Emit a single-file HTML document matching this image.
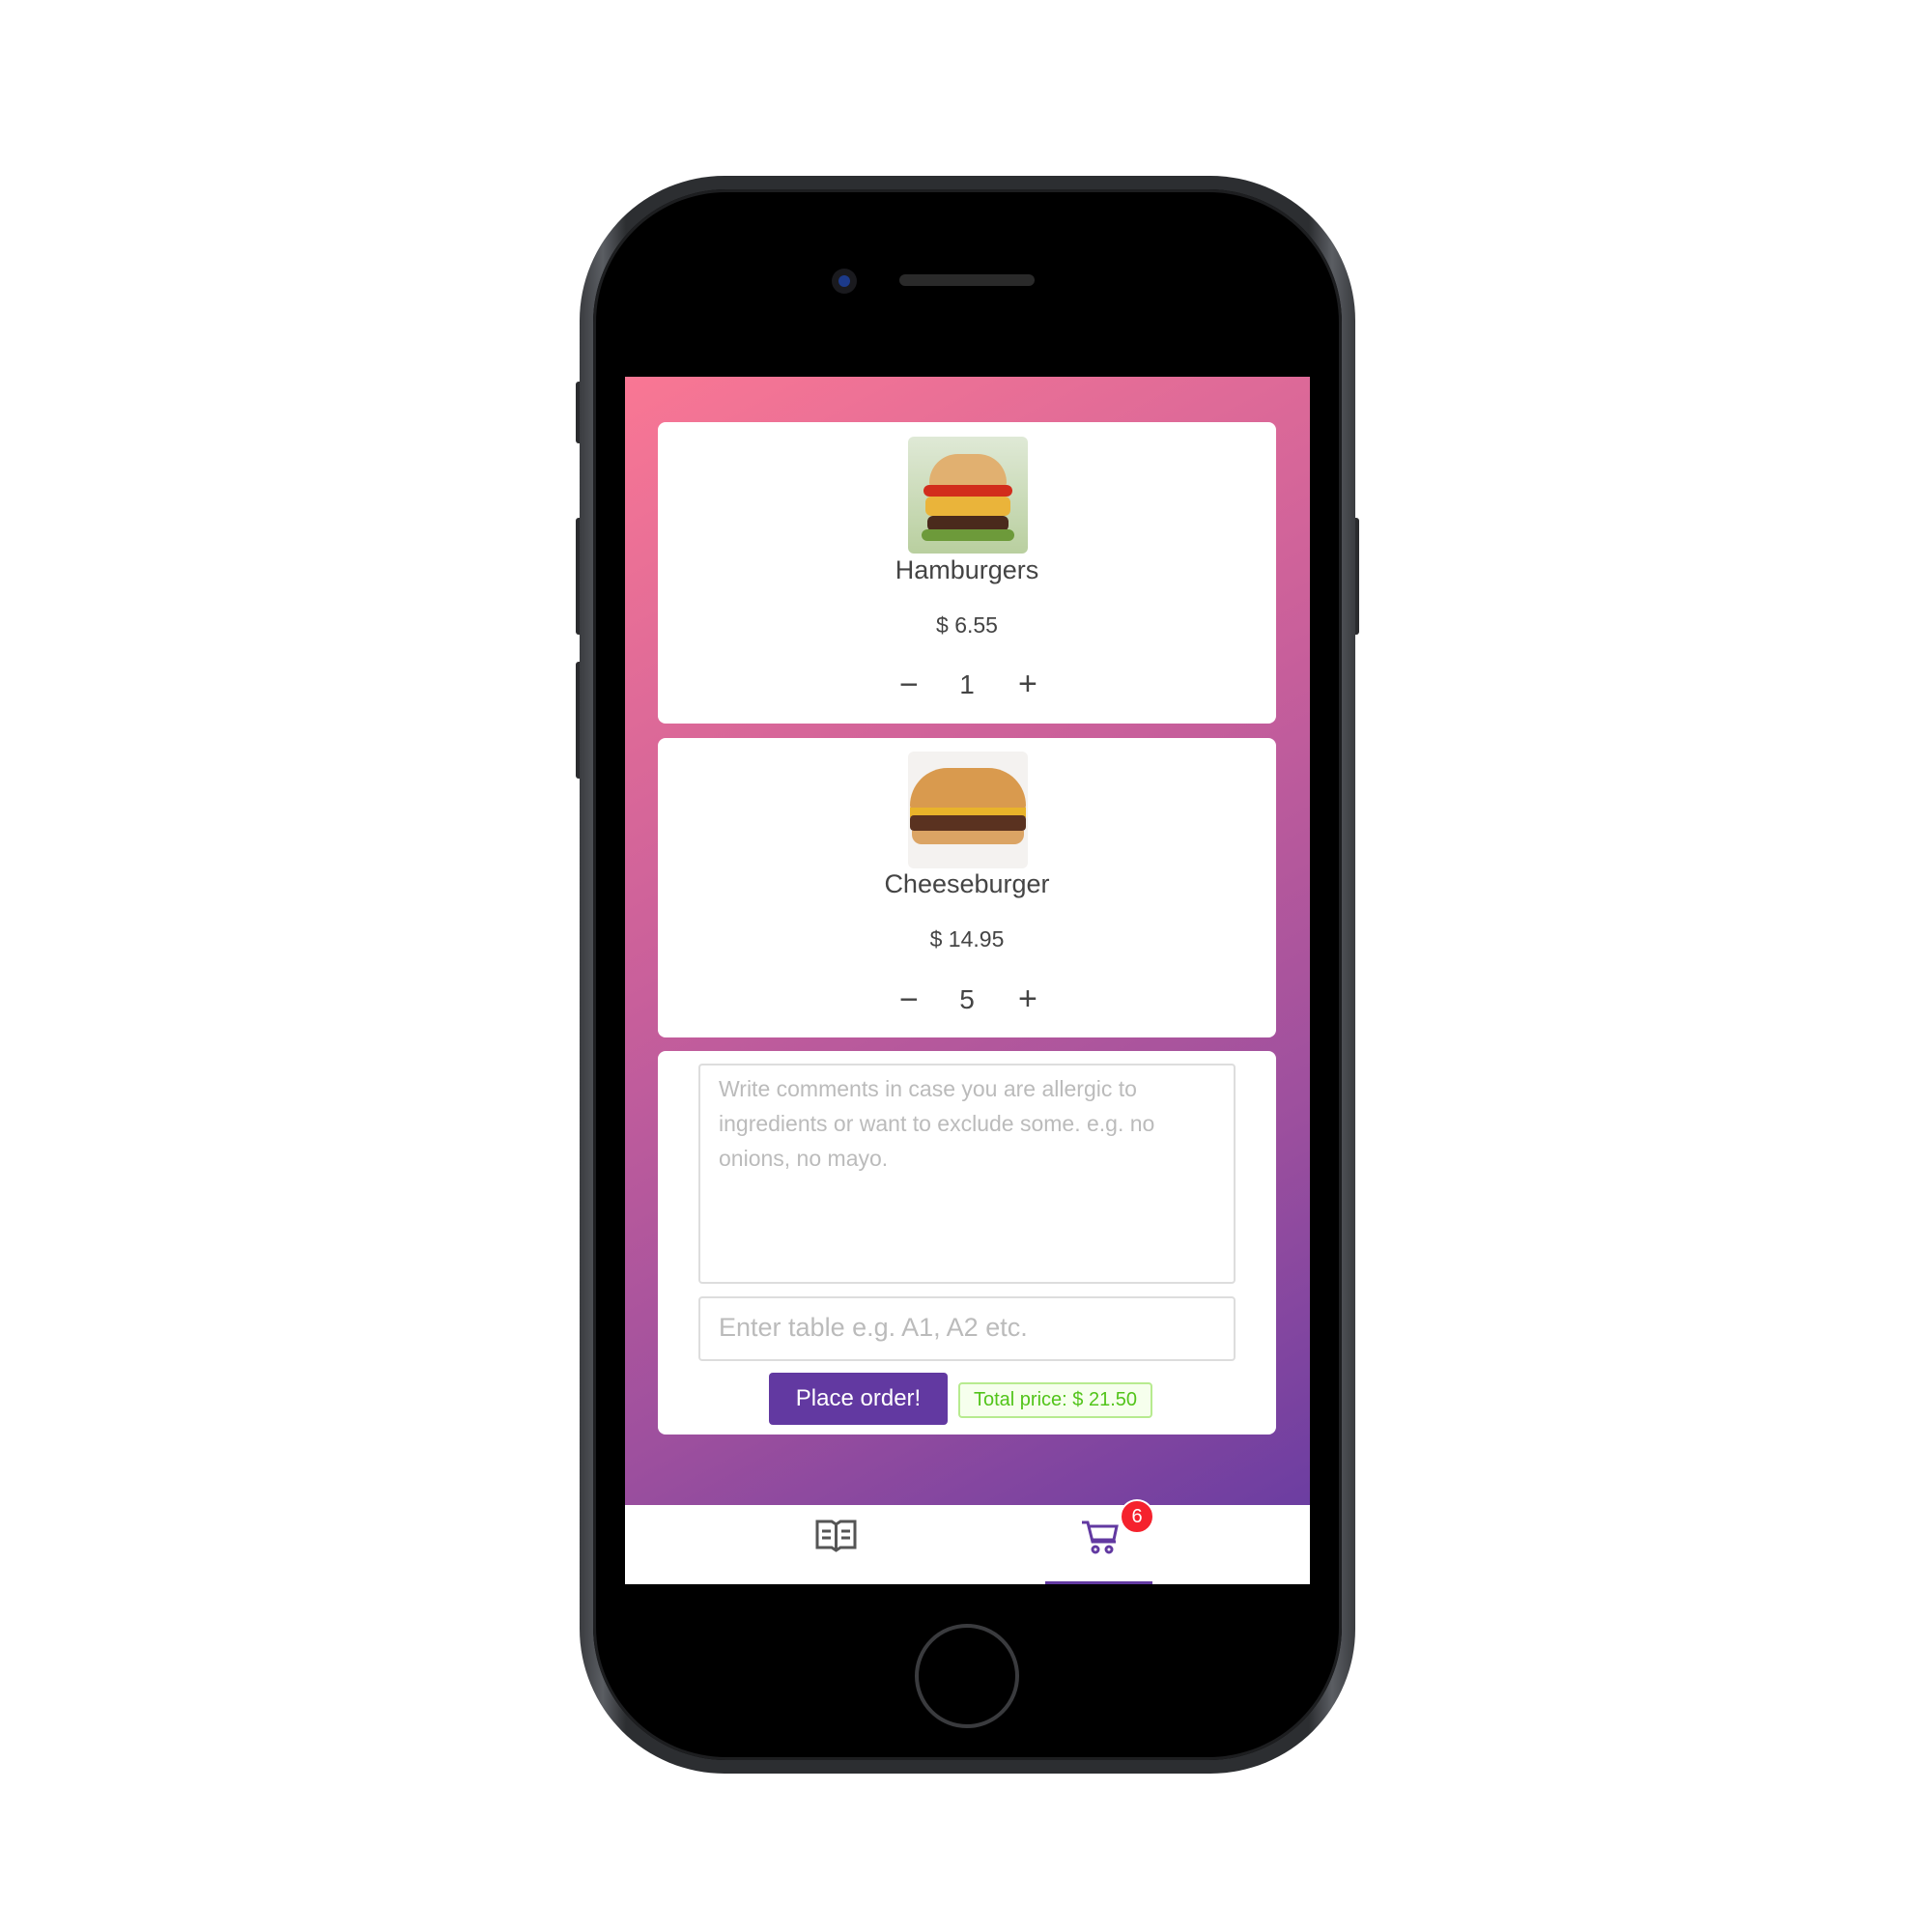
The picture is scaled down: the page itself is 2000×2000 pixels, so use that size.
<!DOCTYPE html>
<html><head><meta charset="utf-8"><style>
*{box-sizing:border-box;margin:0;padding:0}
body{width:2000px;height:2000px;background:#fff;position:relative;overflow:hidden;font-family:"Liberation Sans",sans-serif}
.abs{position:absolute}
.phone{left:600px;top:182px;width:803px;height:1654px;border-radius:150px;background:linear-gradient(90deg,#3a3c40,#5b5e63 3%,#2c2e31 6%,#2c2e31 94%,#5b5e63 97%,#3a3c40);}
.inner{left:614px;top:196px;width:775px;height:1626px;border-radius:138px;background:#000;box-shadow:inset 0 0 0 3px #1d1e20}
.screen{left:647px;top:390px;width:709px;height:1250px;background:linear-gradient(152deg,#f97794 0%,#c85f9b 40%,#9c4f9e 70%,#623aa2 100%);overflow:hidden}
.card{position:absolute;left:34px;width:640px;background:#fff;border-radius:8px}
.name{position:absolute;width:100%;text-align:center;font-size:27px;color:#444}
.price{position:absolute;width:100%;text-align:center;font-size:23px;color:#444}
.cnt{position:absolute;width:100%;text-align:center;font-size:28px;color:#444}
.pm{position:absolute;font-size:34px;color:#444;font-weight:300}
.img{position:absolute;left:259px;width:124px;height:121px;border-radius:6px;overflow:hidden}
.ta{position:absolute;left:42px;width:556px;border:2px solid #ddd;border-radius:4px;color:#bbb}
</style></head><body>
<div class="abs" style="left:596px;top:395px;width:8px;height:64px;background:#2a2b2e;border-radius:3px"></div>
<div class="abs" style="left:596px;top:536px;width:8px;height:121px;background:#2a2b2e;border-radius:3px"></div>
<div class="abs" style="left:596px;top:685px;width:8px;height:121px;background:#2a2b2e;border-radius:3px"></div>
<div class="abs" style="left:1399px;top:536px;width:8px;height:121px;background:#2a2b2e;border-radius:3px"></div>
<div class="abs phone"></div>
<div class="abs inner"></div>
<div class="abs" style="left:861px;top:278px;width:26px;height:26px;border-radius:50%;background:#1a1a1e"><div style="margin:7px;width:12px;height:12px;border-radius:50%;background:#1c3a8a"></div></div>
<div class="abs" style="left:931px;top:284px;width:140px;height:12px;border-radius:6px;background:#2a2a2a"></div>
<div class="abs" style="left:947px;top:1681px;width:108px;height:108px;border-radius:50%;border:4px solid #3a3b3e;background:#000"></div>
<div class="abs screen">
 <div class="card" style="top:47px;height:312px">
  <div class="img" style="top:15px;background:linear-gradient(#dfe9d6,#b9cf9f)">
   <div style="position:absolute;left:22px;top:18px;width:80px;height:34px;border-radius:40px 40px 6px 6px;background:#e1b070"></div>
   <div style="position:absolute;left:16px;top:50px;width:92px;height:12px;background:#d22c1c;border-radius:6px"></div>
   <div style="position:absolute;left:18px;top:62px;width:88px;height:20px;background:#eab43a;border-radius:6px"></div>
   <div style="position:absolute;left:20px;top:82px;width:84px;height:16px;background:#4a2a1c;border-radius:6px"></div>
   <div style="position:absolute;left:14px;top:96px;width:96px;height:12px;background:#6d9a3a;border-radius:6px"></div>
  </div>
  <div class="name" style="top:138px">Hamburgers</div>
  <div class="price" style="top:197px">$ 6.55</div>
  <div class="pm" style="left:250px;top:253px">−</div>
  <div class="cnt" style="top:256px">1</div>
  <div class="pm" style="left:373px;top:252px">+</div>
 </div>
 <div class="card" style="top:374px;height:310px">
  <div class="img" style="top:14px;background:#f4f2f0">
   <div style="position:absolute;left:2px;top:17px;width:120px;height:44px;border-radius:60px 60px 8px 8px;background:#d99a4e"></div>
   <div style="position:absolute;left:2px;top:58px;width:120px;height:10px;background:#e9b32a"></div>
   <div style="position:absolute;left:2px;top:66px;width:120px;height:16px;background:#5a3220;border-radius:4px"></div>
   <div style="position:absolute;left:4px;top:82px;width:116px;height:14px;background:#dba464;border-radius:0 0 10px 10px"></div>
  </div>
  <div class="name" style="top:136px">Cheeseburger</div>
  <div class="price" style="top:195px">$ 14.95</div>
  <div class="pm" style="left:250px;top:252px">−</div>
  <div class="cnt" style="top:255px">5</div>
  <div class="pm" style="left:373px;top:251px">+</div>
 </div>
 <div class="card" style="top:698px;height:397px">
  <div class="ta" style="top:13px;height:228px;padding:6px 19px;font-size:23px;line-height:36px">Write comments in case you are allergic to ingredients or want to exclude some. e.g. no onions, no mayo.</div>
  <div class="ta" style="top:254px;height:67px;padding:15px 19px;font-size:27px">Enter table e.g. A1, A2 etc.</div>
  <div style="position:absolute;left:115px;top:333px;width:185px;height:54px;background:#6239a1;border-radius:4px;color:#fff;font-size:24px;text-align:center;line-height:54px">Place order!</div>
  <div style="position:absolute;left:311px;top:343px;width:201px;height:37px;background:#f6ffed;border:2px solid #b7eb8f;border-radius:4px;color:#52c41a;font-size:20px;text-align:center;line-height:33px">Total price: $ 21.50</div>
 </div>
 <div style="position:absolute;left:0;top:1168px;width:709px;height:82px;background:#fff">
  <svg style="position:absolute;left:197px;top:15px" width="43" height="34" viewBox="0 0 43 34" fill="none" stroke="#555" stroke-width="3"><path d="M2 2h15l4.5 3 4.5-3h15v27H26l-4.5 3-4.5-3H2z"/><path d="M21.5 5v26M7 12h9M7 19h9M27 12h9M27 19h9"/></svg>
  <svg style="position:absolute;left:472px;top:16px" width="40" height="36" viewBox="0 0 40 36" fill="none" stroke="#6239a1" stroke-width="3"><path d="M1 2h6l5 20h24M8 6h29l-3 14H12"/><circle cx="15" cy="30" r="3"/><circle cx="29" cy="30" r="3"/></svg>
  <div style="position:absolute;left:512px;top:-6px;width:36px;height:36px;border-radius:50%;background:#f5222d;border:2px solid #fff;color:#fff;font-size:20px;text-align:center;line-height:32px">6</div>
  <div style="position:absolute;left:435px;top:79px;width:111px;height:3px;background:#6239a1"></div>
 </div>
</div>
</body></html>
